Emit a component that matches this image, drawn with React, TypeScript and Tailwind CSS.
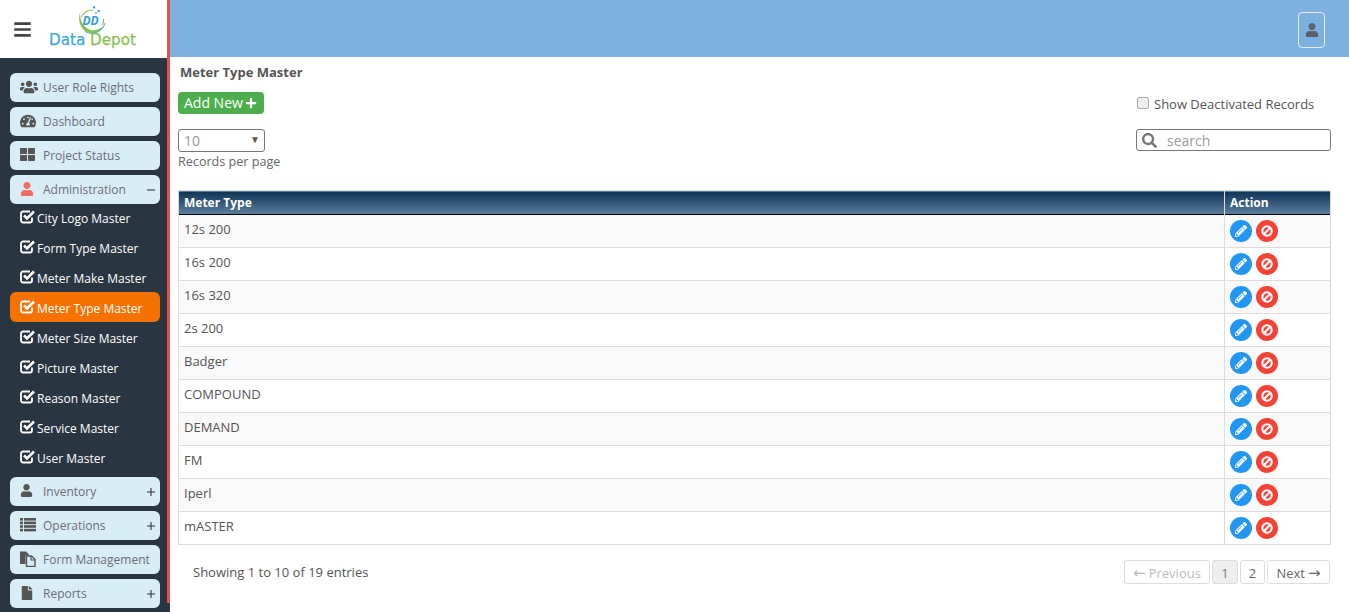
import React from 'react';
import { FaUsers, FaTachometerAlt, FaThLarge, FaUser, FaFile, FaPlus, FaSearch, FaPencilAlt, FaBars } from 'react-icons/fa';

const rows = ['12s 200', '16s 200', '16s 320', '2s 200', 'Badger', 'COMPOUND', 'DEMAND', 'FM', 'Iperl', 'mASTER'];
const subItems = ['City Logo Master', 'Form Type Master', 'Meter Make Master', 'Meter Type Master', 'Meter Size Master', 'Picture Master', 'Reason Master', 'Service Master', 'User Master'];

const CheckIcon = () => (
  <svg width="16" height="15" viewBox="0 0 16 15" className="shrink-0 -mt-[2px]">
    <path d="M12 8.5V11.5A2 2 0 0 1 10 13.5H3A2 2 0 0 1 1 11.5V4.5A2 2 0 0 1 3 2.5H10" fill="none" stroke="#fff" strokeWidth="1.8" />
    <path d="M4 6.5L7 9.5L14 2.5" fill="none" stroke="#fff" strokeWidth="2.6" />
  </svg>
);

const FilesIcon = () => (
  <svg width="16" height="16" viewBox="0 0 16 16">
    <path d="M0 0.5H6L9 3.5V4.5H5.5V13H0Z" fill="#555" />
    <path d="M6.5 5H11.5L15 8.5V15.5H6.5Z" fill="none" stroke="#555" strokeWidth="1.4" />
    <path d="M11 5V9H15" fill="none" stroke="#555" strokeWidth="1.2" />
  </svg>
);

const ListIcon = () => (
  <svg width="16" height="14" viewBox="0 0 16 14" fill="#555">
    {[0, 3.6, 7.2, 10.8].map((y) => (
      <g key={y}>
        <rect x="0" y={y} width="3" height="2.6" />
        <rect x="4" y={y} width="12" height="2.6" />
      </g>
    ))}
  </svg>
);

const BanIcon = () => (
  <svg width="12" height="12" viewBox="0 0 12 12" fill="none" stroke="#fff" strokeWidth="2.1">
    <circle cx="6" cy="6" r="4.7" />
    <path d="M2.8 9.2L9.2 2.8" />
  </svg>
);

const Sign: React.FC<{ plus?: boolean }> = ({ plus }) => (
  <svg width="8" height="8" viewBox="0 0 8 8" className="absolute right-[5px] top-[11px]">
    <path d={plus ? 'M0 4H8M4 0V8' : 'M0 4H8'} stroke="#333" strokeWidth="1.1" />
  </svg>
);

const NavButton: React.FC<{ icon: React.ReactNode; label: string; sign?: '+' | '-' }> = ({ icon, label, sign }) => (
  <div className="h-[29px] mb-[5px] ml-[10px] mr-[7px] rounded-[6px] bg-[#d9edf7] flex items-center text-[#6a6e74] text-[12px] relative">
    <span className="w-[33px] pl-[10px] shrink-0 flex items-center -mt-[2px]">{icon}</span>
    <span className="pt-[1px]">{label}</span>
    {sign && <Sign plus={sign === '+'} />}
  </div>
);

const Logo = () => (
  <div className="flex flex-col items-center w-[87px] ml-[17px] self-start pt-[5px]">
    <svg width="32" height="29" viewBox="0 0 32 29" className="-mb-[1px]">
      <path d="M3 8 C0 17 5 28 15 28 C20 28 25 25.5 27.5 20 C24 24 19 25.8 14.5 25 C7.5 23.5 2.8 16.5 3 8 Z" fill="#8cc152" />
      <path d="M4.5 12.5 A11 11 0 0 1 16 5" fill="none" stroke="#8cc152" strokeWidth="1.1" />
      <path d="M25.5 20 A11.5 11.5 0 0 0 26.5 14" fill="none" stroke="#8cc152" strokeWidth="1.2" />
      <path d="M8 26.5 A13.5 13.5 0 0 0 28 18" fill="none" stroke="#3ba7dc" strokeWidth="0.9" />
      <rect x="16" y="1.2" width="2.2" height="2.2" fill="#3ba7dc" />
      <rect x="20.5" y="5" width="2.2" height="2.2" fill="#3ba7dc" />
      <rect x="18" y="7.2" width="1.8" height="1.8" fill="#7cc3e8" />
      <text x="5.5" y="19.5" fontFamily="'Open Sans', sans-serif" fontSize="12" fontWeight="700" fontStyle="italic" fill="#2f9fdc">DD</text>
    </svg>
    <div className="text-[15.2px] leading-[14px] font-['DejaVu_Sans',sans-serif] whitespace-nowrap [-webkit-text-stroke:0.25px]">
      <span className="text-[#3ba7dc]">Data </span>
      <span className="text-[#8cc152]">Depot</span>
    </div>
  </div>
);

export default function App() {
  return (
    <div className="w-[1349px] h-[612px] overflow-hidden flex bg-white font-['Open_Sans',sans-serif] text-[#555]">
      <aside className="w-[170px] shrink-0 bg-[#2a3542]">
        <div className="h-[603px] border-r-[3px] border-[#e8504a] flex flex-col">
          <div className="h-[58px] bg-white flex items-center shrink-0 pl-[13px]">
            <FaBars className="text-[#444] text-[19px]" />
            <Logo />
          </div>
          <div className="pt-[15px]">
            <NavButton icon={<FaUsers className="text-[#555] text-[18px]" />} label="User Role Rights" />
            <NavButton icon={<FaTachometerAlt className="text-[#555] text-[16px]" />} label="Dashboard" />
            <NavButton icon={<FaThLarge className="text-[#555] text-[15px]" />} label="Project Status" />
            <NavButton icon={<FaUser className="text-[#fb6a5e] text-[14px]" />} label="Administration" sign="-" />
            <div className="-mt-[7px] mb-[5px]">
              {subItems.map((item) => (
                <div
                  key={item}
                  className={`h-[30px] ml-[10px] mr-[7px] pl-[10px] rounded-[6px] flex items-center gap-[1px] text-white text-[12px] ${item === 'Meter Type Master' ? 'bg-[#f57200]' : ''}`}
                >
                  <CheckIcon />
                  <span className="pt-[4px]">{item}</span>
                </div>
              ))}
            </div>
            <NavButton icon={<FaUser className="text-[#555] text-[13px]" />} label="Inventory" sign="+" />
            <NavButton icon={<ListIcon />} label="Operations" sign="+" />
            <NavButton icon={<FilesIcon />} label="Form Management" />
            <NavButton icon={<FaFile className="text-[#555] text-[14px]" />} label="Reports" sign="+" />
          </div>
        </div>
      </aside>

      <main className="flex-1 min-w-0 flex flex-col">
        <header className="h-[57px] shrink-0 bg-[#7eb0e0] flex items-center justify-end pr-[24px]">
          <div className="w-[27px] h-[36px] rounded-[4px] border border-[#e6eef7] flex items-center justify-center mt-[3px]">
            <FaUser className="text-[#5b6168] text-[14px]" />
          </div>
        </header>

        <div className="pl-[8px] pr-[18px] flex-1">
          <div className="pl-[2px] pt-[6px] text-[13px] leading-[18px] font-bold text-[#555]">Meter Type Master</div>

          <div className="flex justify-between items-start mt-[11px]">
            <div>
              <div className="w-[86px] h-[22px] rounded-[4px] bg-[#4cae4c] text-white text-[14px] flex items-center pl-[6px] pb-[2px] gap-[2px]">
                Add New <FaPlus className="text-[12px] mt-[1px]" />
              </div>
              <div className="mt-[15px] w-[87px] h-[23px] rounded-[3px] border border-[#777] pl-[5px] flex items-center justify-between pr-[4px] text-[14px] text-[#999]">
                10
                <span className="text-[#555] text-[10px] -mt-[2px]">▼</span>
              </div>
              <div className="text-[12.6px] leading-[18px] mt-[1px] text-[#666]">Records per page</div>
            </div>
            <div className="w-[195px]">
              <div className="flex items-center h-[22px] pl-[1px] mt-[2px] gap-[5px] text-[13px] text-[#555]">
                <span className="w-[12px] h-[12px] rounded-[2px] border border-[#aaa] bg-[#eee] -mt-[5px]" />
                Show Deactivated Records
              </div>
              <div className="mt-[13px] h-[22px] rounded-[3px] border border-[#777] flex items-center pl-[5px] text-[14px] text-[#999]">
                <FaSearch className="text-[#777] text-[15px] mr-[10px]" />
                search
              </div>
            </div>
          </div>

          <table className="mt-[19px] w-[1153px] table-fixed border-collapse text-[13px] text-[#555]">
            <thead>
              <tr className="h-[24px] bg-gradient-to-b from-[#0f3557] to-[#5d7f9f] text-white text-[12px] font-bold text-left border-b border-t border-t-[#ddd] border-b-black">
                <th className="pl-[5px] pt-[1px] border-x border-[#ddd]">Meter Type</th>
                <th className="w-[106px] pl-[5px] pt-[1px] border-x border-[#ddd]">Action</th>
              </tr>
            </thead>
            <tbody>
              {rows.map((name, i) => (
                <tr key={name} className={`h-[33px] border-b border-[#ddd] ${i % 2 === 0 ? 'bg-[#f9f9f9]' : 'bg-white'}`}>
                  <td className="pl-[5px] pb-[2px] border-x border-[#ddd]">{name}</td>
                  <td className="pl-[5px] border-x border-[#ddd]">
                    <div className="flex gap-[4px]">
                      <span className="w-[22px] h-[22px] rounded-full bg-[#2196f3] flex items-center justify-center">
                        <FaPencilAlt className="text-white text-[12px]" />
                      </span>
                      <span className="w-[22px] h-[22px] rounded-full bg-[#f44336] flex items-center justify-center">
                        <BanIcon />
                      </span>
                    </div>
                  </td>
                </tr>
              ))}
            </tbody>
          </table>

          <div className="flex justify-between items-start mt-[15px] pr-[1px]">
            <div className="pl-[15px] pt-[3px] text-[13px] leading-[18px] text-[#555]">Showing 1 to 10 of 19 entries</div>
            <div className="flex gap-[2px] text-[13px] leading-none">
              <span className="h-[24px] w-[86px] pt-[2px] rounded-[3px] border border-[#ddd] text-[#bbb] flex items-center justify-center gap-[3px]">
                <span className="font-['DejaVu_Sans',sans-serif] text-[15px]">←</span> Previous
              </span>
              <span className="h-[24px] w-[26px] pt-[2px] rounded-[3px] border border-[#ddd] bg-[#eee] text-[#777] flex items-center justify-center">1</span>
              <span className="h-[24px] w-[25px] pt-[2px] rounded-[3px] border border-[#ddd] text-[#666] flex items-center justify-center">2</span>
              <span className="h-[24px] w-[63px] pt-[2px] rounded-[3px] border border-[#ddd] text-[#666] flex items-center justify-center gap-[3px]">
                Next <span className="font-['DejaVu_Sans',sans-serif] text-[15px]">→</span>
              </span>
            </div>
          </div>
        </div>
      </main>
    </div>
  );
}
